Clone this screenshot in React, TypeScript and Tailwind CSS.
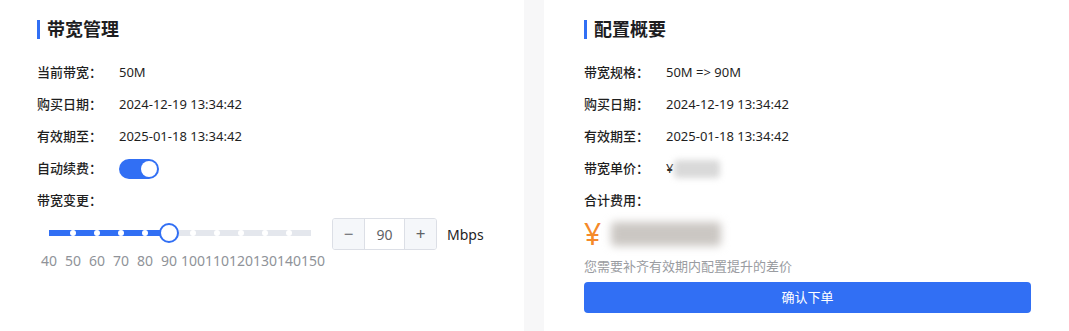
import React from "react";

const FONT = { fontFamily: '"Noto Sans", "Noto Sans CJK SC", sans-serif' };
const STOPS = [40, 50, 60, 70, 80, 90, 100, 110, 120, 130, 140, 150];
const VALUE = 90;

function Title({ text }: { text: string }) {
  return (
    <div className="flex h-[26px] items-center gap-[7px]">
      <span className="h-[19px] w-[3px] bg-[#316ff4]" />
      <h2 className="text-[18px] font-bold text-[#1d1d1f]">{text}</h2>
    </div>
  );
}

function Row({ label, children, w }: { label: string; children?: React.ReactNode; w: string }) {
  return (
    <div className="flex h-8 items-center text-[13px] text-[#1f1f1f]">
      <span className={`${w} shrink-0 font-medium`}>{label}</span>
      {children}
    </div>
  );
}

function Slider() {
  const idx = STOPS.indexOf(VALUE);
  return (
    <div className="relative h-[58px] w-[285px]">
      {/* track */}
      <div className="absolute left-[12px] top-[13px] flex h-[6px] w-[262px]">
        {STOPS.slice(1).map((s, i) => (
          <div key={s} className={`h-full flex-1 ${i < idx ? "bg-[#316ff4]" : "bg-[#e4e7ed]"}`} />
        ))}
      </div>
      {STOPS.map((s, i) =>
        i === 0 || i === STOPS.length - 1 || i === idx ? null : (
          <span
            key={s}
            className="absolute top-[13px] h-[6px] w-[6px] -translate-x-1/2 rounded-full bg-white"
            style={{ left: 12 + i * 24 }}
          />
        )
      )}
      <span
        className="absolute top-[6px] h-[20px] w-[20px] -translate-x-1/2 rounded-full border-2 border-[#316ff4] bg-white"
        style={{ left: 12 + idx * 24 }}
      />
      <div className="absolute left-0 top-[34px] flex">
        {STOPS.map((s) => (
          <span key={s} className="flex w-[24px] justify-center whitespace-nowrap text-[14px] leading-[20px] text-[#909399]">
            {s}
          </span>
        ))}
      </div>
    </div>
  );
}

export default function App() {
  return (
    <div className="flex h-[331px] w-[1069px] bg-[#f7f7f8]" style={FONT}>
      <section className="w-[524px] bg-white pl-[37px] pt-4">
        <Title text="带宽管理" />
        <div className="mt-[15px] flex flex-col">
          <Row label="当前带宽：" w="w-[82px]">50M</Row>
          <Row label="购买日期：" w="w-[82px]">2024-12-19 13:34:42</Row>
          <Row label="有效期至：" w="w-[82px]">2025-01-18 13:34:42</Row>
          <Row label="自动续费：" w="w-[82px]">
            <span className="flex h-[20px] w-[40px] items-center justify-end rounded-full bg-[#316ff4] pr-[2px]">
              <span className="h-[16px] w-[16px] rounded-full bg-white" />
            </span>
          </Row>
          <Row label="带宽变更：" w="w-[82px]" />
          <div className="flex items-start">
            <Slider />
            <div className="ml-[10px] mt-[1px] flex h-[32px] w-[105px] overflow-hidden rounded-[3px] border border-[#dcdfe6] text-[14px]">
              <span className="flex w-[32px] items-center justify-center border-r border-[#dcdfe6] bg-[#f5f7fa] text-[17px] text-[#606266]">−</span>
              <span className="flex flex-1 items-center justify-center text-[#606266]">90</span>
              <span className="flex w-[32px] items-center justify-center border-l border-[#dcdfe6] bg-[#f5f7fa] text-[17px] text-[#606266]">+</span>
            </div>
            <span className="ml-[10px] mt-[1px] flex h-[32px] items-center text-[14px] text-[#1f1f1f]">Mbps</span>
          </div>
        </div>
      </section>
      <div className="w-[20px]" />
      <section className="flex-1 bg-white pl-[40px] pr-[38px] pt-4">
        <Title text="配置概要" />
        <div className="mt-[15px] flex flex-col">
          <Row label="带宽规格：" w="w-[82px]">50M =&gt; 90M</Row>
          <Row label="购买日期：" w="w-[82px]">2024-12-19 13:34:42</Row>
          <Row label="有效期至：" w="w-[82px]">2025-01-18 13:34:42</Row>
          <Row label="带宽单价：" w="w-[82px]">
            <span>¥</span>
            <span className="ml-[1px] h-[18px] w-[46px] rounded bg-[#d9d9d9] blur-[3px]" />
          </Row>
          <Row label="合计费用：" w="w-[82px]" />
          <div className="flex h-[34px] items-center">
            <span className="text-[30px] leading-none text-[#f5892a]">¥</span>
            <span className="ml-[10px] h-[24px] w-[110px] rounded bg-[#cbc7c3] blur-[4px]" />
          </div>
          <p className="mt-[5px] text-[13px] leading-[20px] text-[#9a9ca1]">您需要补齐有效期内配置提升的差价</p>
          <button className="mt-[6px] h-[31px] w-full rounded-[4px] bg-[#316ff4] text-[13px] text-white">确认下单</button>
        </div>
      </section>
    </div>
  );
}
